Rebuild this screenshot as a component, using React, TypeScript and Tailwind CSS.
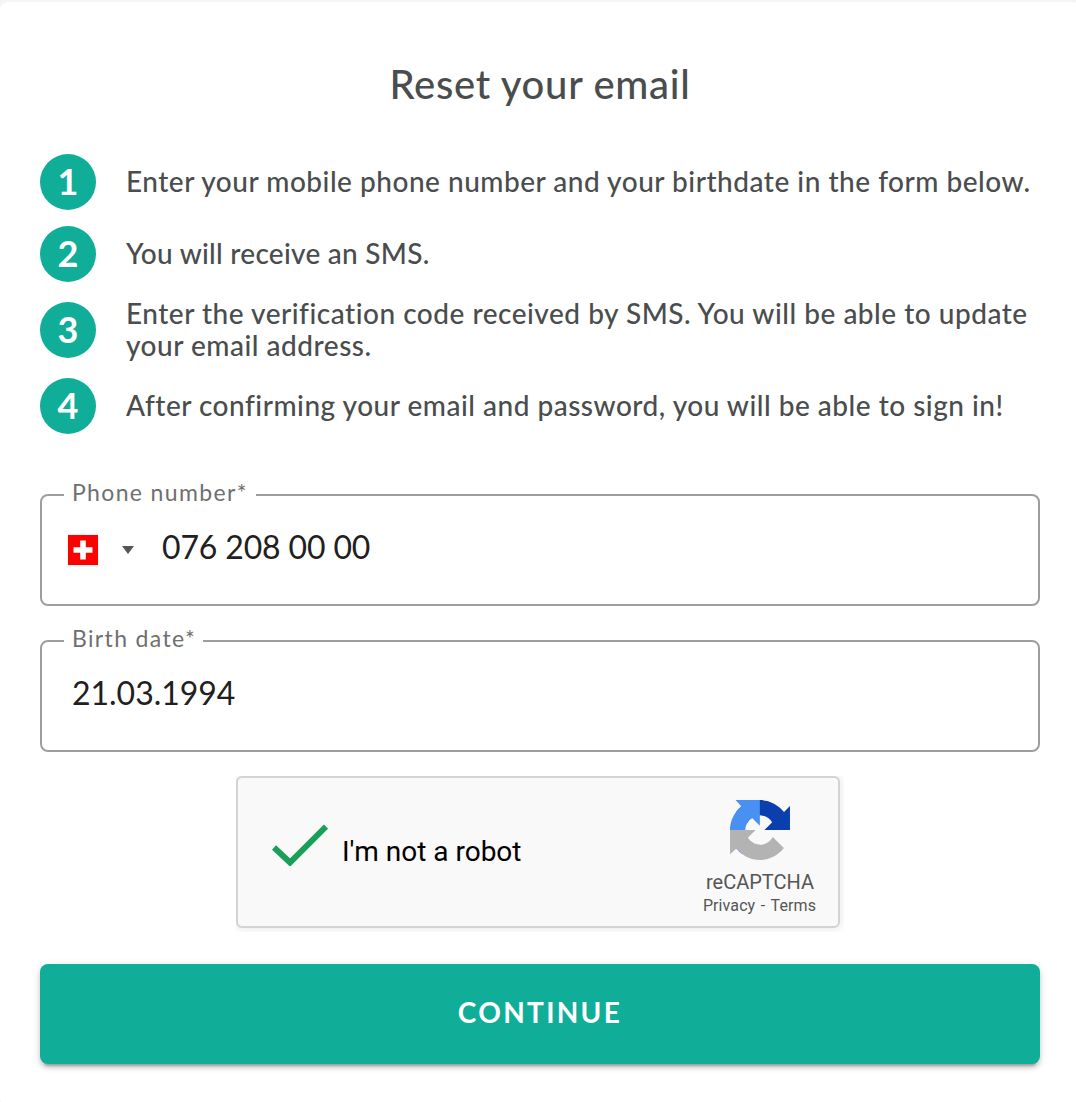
import { useState } from "react"

const steps = [
  { text: "Enter your mobile phone number and your birthdate in the form below.", style: "tracking-[0.51px]" },
  { text: "You will receive an SMS.", style: "tracking-[0.26px]" },
  { text: "Enter the verification code received by SMS. You will be able to update your email address.", style: "tracking-[0.51px]" },
  { text: "After confirming your email and password, you will be able to sign in!", style: "tracking-[0.5px]" },
]

const SwissFlag = () => (
  <svg className="h-8 w-8" viewBox="0 0 32 32">
    <rect x="0.5" y="0.5" width="31" height="31" fill="#e4e9e9" />
    <rect x="1" y="1" width="30" height="30" fill="#ff0000" />
    <path d="M13.2 6.5h5.6v6.7h6.7v5.6h-6.7v6.7h-5.6v-6.7H6.5v-5.6h6.7z" fill="#fff" />
  </svg>
)

const RecaptchaLogo = () => (
  <svg className="h-[60px] w-[60px]" viewBox="0 0 64 64">
    <path fill="#0a3fad" d="M64 31.955l-.033-1.37V6.4L57.6 12.8C50.948 4.674 42.033.093 32.05.093c-10.4 0-19.622 4.96-25.458 12.64l11.736 11.86a15.55 15.55 0 0 1 4.754-5.334c2.05-1.6 4.952-2.906 8.968-2.906.485 0 .86.057 1.135.163 4.976.393 9.288 3.14 11.828 7.124l-8.307 8.307L64 31.953" />
    <path fill="#4891f3" d="M31.862.094l-1.37.033H5.9l6.1 6.5C4.58 13.147 0 22.06 0 32.046c0 10.4 4.96 19.622 12.64 25.458L24.5 45.768a15.55 15.55 0 0 1-5.334-4.754c-1.6-2.05-2.906-4.952-2.906-8.968 0-.485.057-.86.163-1.135.393-4.976 3.14-9.288 7.124-11.828l8.307 8.307L31.86.095" />
    <path fill="#b3b3b3" d="M.001 32.045l.033 1.37V57.9L6.8 51.6C13.05 59.33 21.97 63.907 31.954 63.907c10.4 0 19.622-4.96 25.458-12.64l-11.736-11.86a15.55 15.55 0 0 1-4.754 5.334c-2.05 1.6-4.952 2.906-8.968 2.906-.485 0-.86-.057-1.135-.163-4.976-.393-9.288-3.14-11.828-7.124l8.307-8.307c-10.522.04-22.4.066-27.295-.005" />
  </svg>
)

export default function App() {
  const [phone, setPhone] = useState("076 208 00 00")
  const [birthDate, setBirthDate] = useState("21.03.1994")

  return (
    <div className="h-[1102px] w-full overflow-hidden bg-[#f5f5f5] pt-0.5 font-[Lato,sans-serif]">
      <div className="h-[1104px] w-[1080px] rounded-lg bg-white px-10 pt-14">
        <h1 className="text-center text-[40px] leading-[52px] font-medium tracking-[0.7px] text-[#4a4d4e]">
          Reset your email
        </h1>
        <ol className="mt-11 flex flex-col gap-4">
          {steps.map((step, index) => (
            <li key={index} className="flex items-center">
              <span className="flex h-14 w-14 shrink-0 items-center justify-center rounded-full bg-[#10ae98] pb-0.5 text-[36px] leading-none font-bold text-white">
                {index + 1}
              </span>
              <p className={`-mt-px mb-px ml-[30px] text-[28px] leading-8 font-medium text-[#4a4d4e] ${step.style}`}>
                {step.text}
              </p>
            </li>
          ))}
        </ol>
        <form onSubmit={(e) => e.preventDefault()}>
          <fieldset className="mt-[49px] h-[123px] rounded-lg border-2 border-[#9e9e9e] pl-[25px]">
            <legend className="-ml-[3px] h-6 w-[192px] pl-2 text-[23px] leading-[18px] tracking-[1.35px] whitespace-nowrap text-[#6f6f6f]">
              Phone number*
            </legend>
            <div className="flex items-center pt-[22px]">
              <SwissFlag />
              <svg className="ml-[23px] h-2 w-3" viewBox="0 0 12 8">
                <path d="M0 0h12L6 8z" fill="#555" />
              </svg>
              <input
                className="-mt-0.5 ml-7 w-[600px] pb-1 text-[32px] leading-10 tracking-[-0.15px] text-[#1f2020] outline-none"
                type="tel"
                value={phone}
                onChange={(e) => { setPhone(e.target.value) }}
              />
            </div>
          </fieldset>
          <fieldset className="mt-[23px] h-[123px] rounded-lg border-2 border-[#9e9e9e] pl-[26px]">
            <legend className="-ml-1 h-6 w-[139px] pl-2 text-[23px] leading-[18px] tracking-[1.35px] whitespace-nowrap text-[#6f6f6f]">
              Birth date*
            </legend>
            <div className="flex items-center pt-[20px] pl-1">
              <input
                className="w-[600px] text-[32px] leading-10 tracking-[-0.02px] text-[#1f2020] outline-none"
                type="text"
                value={birthDate}
                onChange={(e) => { setBirthDate(e.target.value) }}
              />
            </div>
          </fieldset>
          <div className="mt-6 ml-[196px] h-[156px] w-[608px] overflow-hidden font-[Roboto,sans-serif]">
            <div className="flex h-[152px] w-[604px] justify-between rounded-md border-2 border-[#d3d3d3] bg-[#f9f9f9] shadow-[0_0_8px_2px_rgba(0,0,0,0.08)]">
              <div className="flex items-center pl-[34px]">
                <svg className="-mt-3.5 h-[42px] w-14" viewBox="0 0 56 42">
                  <path d="M2 23.5L18 38.5L54 2.5" fill="none" stroke="#1a9f59" strokeWidth="6" />
                </svg>
                <span className="ml-3.5 text-[28px] leading-8 text-black">I'm not a robot</span>
              </div>
              <div className="flex w-[156px] flex-col items-center pt-[22px] text-[#555]">
                <RecaptchaLogo />
                <span className="mt-2.5 text-[20px] leading-6">reCAPTCHA</span>
                <span className="mr-px text-[16px] leading-6 tracking-[0.1px] [word-spacing:1.5px]">Privacy - Terms</span>
              </div>
            </div>
          </div>
          <button
            type="submit"
            className="mt-8 h-[100px] w-full rounded-lg bg-[#10ae98] pb-1 text-[28px] font-bold tracking-[2.3px] text-white shadow-[0_6px_2px_-4px_rgba(0,0,0,0.2),0_4px_4px_0_rgba(0,0,0,0.14),0_2px_10px_0_rgba(0,0,0,0.12)]"
          >
            CONTINUE
          </button>
        </form>
      </div>
    </div>
  )
}
